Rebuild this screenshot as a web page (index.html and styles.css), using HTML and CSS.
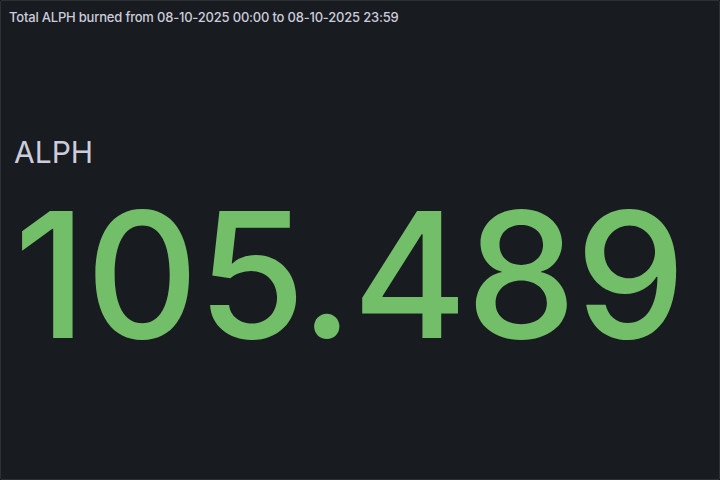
FILE: index.html
```html
<html lang="en">

<head>
    <meta charset="UTF-8">
    <meta name="viewport" content="width=device-width, initial-scale=1.0">
    <title>ALPH burned</title>
    <link rel="stylesheet" href="styles.css">
</head>

<body>
    <div class="panel">
        <div class="panel-header">
            <h2 class="panel-title">Total ALPH burned from 08-10-2025 00:00 to 08-10-2025 23:59</h2>
        </div>
        <div class="panel-content">
            <div class="stat">
                <div class="stat-label">ALPH</div>
                <div class="stat-value">105.489</div>
            </div>
        </div>
    </div>
</body>

</html>
```

FILE: styles.css
```css
html,
body {
    margin: 0;
    padding: 0;
    height: 100%;
    background: #111217;
    font-family: Inter, "Noto Sans", sans-serif;
}

.panel {
    box-sizing: border-box;
    height: 480px;
    width: 720px;
    background: #181b1f;
    border: 1px solid #2d3035;
    border-radius: 2px;
    display: flex;
    flex-direction: column;
}

.panel-header {
    height: 32px;
    padding: 0 8px;
    display: flex;
    align-items: center;
}

.panel-title {
    margin: 0;
    font-size: 13px;
    font-weight: 500;
    letter-spacing: -0.2px;
    color: #ccccdc;
    white-space: nowrap;
}

.panel-content {
    flex: 1;
    padding: 101px 13px 0;
}

.stat {
    display: flex;
    flex-direction: column;
}

.stat-label {
    font-size: 30px;
    line-height: 36px;
    color: #ccccdc;
}

.stat-value {
    margin-top: 17px;
    font-size: 175px;
    font-weight: 500;
    line-height: 1;
    color: #73bf69;
    letter-spacing: -1px;
}
```
